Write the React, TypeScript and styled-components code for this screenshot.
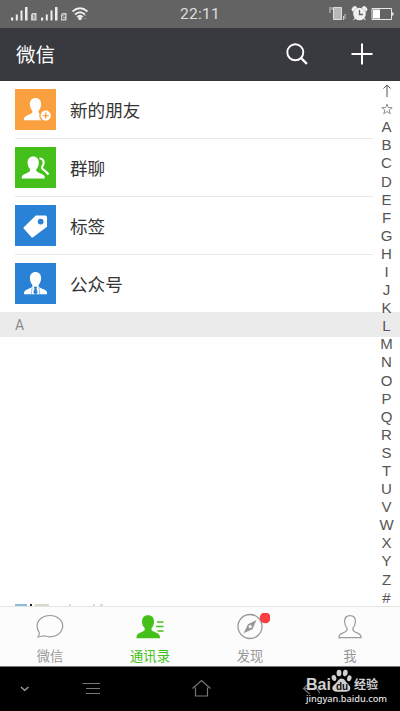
import React from 'react';
import styled, { createGlobalStyle } from 'styled-components';

const Global = createGlobalStyle`
  * { box-sizing: border-box; }
  body { margin: 0; background: #fff; font-family: Roboto, "Noto Sans CJK SC", sans-serif; }
  svg { display: block; flex: none; }
`;

const Screen = styled.div`
  width: 400px;
  height: 711px;
  display: flex;
  flex-direction: column;
  overflow: hidden;
  background: #fff;
`;

const StatusBar = styled.header`
  height: 28px;
  flex: none;
  display: grid;
  grid-template-columns: 1fr auto 1fr;
  background: #636363;
`;

const Clock = styled.time`
  color: #dedede;
  font: 400 15.5px/29px Roboto, sans-serif;
  letter-spacing: 0.25px;
`;

const StatusRight = styled.div`
  display: flex;
  justify-content: flex-end;
`;

const TitleBar = styled.div`
  height: 53px;
  flex: none;
  display: flex;
  align-items: center;
  gap: 43px;
  padding: 0 27px 0 16px;
  background: #393a3f;
  border-bottom: 1px solid #37363c;
`;

const Title = styled.h1`
  margin: 0;
  flex: 1;
  color: #fff;
  font: 400 19.5px/52px "Noto Sans CJK SC", sans-serif;
`;

const Content = styled.main`
  position: relative;
  height: 525px;
  flex: none;
`;

const Row = styled.div`
  height: 58px;
  padding-left: 15px;
`;

const RowInner = styled.div<{ $last?: boolean }>`
  width: 358px;
  height: 58px;
  display: flex;
  align-items: center;
  gap: 14px;
  border-bottom: 1px solid ${(p) => (p.$last ? 'transparent' : '#e9e9e9')};
`;

const Tile = styled.div<{ $color: string }>`
  width: 41px;
  height: 41px;
  background: ${(p) => p.$color};
`;

const Label = styled.span`
  color: #353535;
  font: 400 17.6px/26px "Noto Sans CJK SC", sans-serif;
`;

const Section = styled.div`
  height: 25px;
  padding-left: 15px;
  margin-top: -1px;
  background: #ebebeb;
  color: #8a8a8a;
  font: 400 14px/27px Roboto, sans-serif;
`;

const Peek = styled.div`
  position: absolute;
  left: 15px;
  bottom: 0;
`;

const Index = styled.nav`
  position: absolute;
  top: 1px;
  right: 0;
  width: 27px;
  display: flex;
  flex-direction: column;
  align-items: center;
`;

const Letter = styled.span`
  height: 18.1px;
  display: flex;
  align-items: center;
  color: #555;
  font: 400 15px/18px "Liberation Sans", sans-serif;
`;

const TabBar = styled.nav`
  height: 60px;
  flex: none;
  display: grid;
  grid-template-columns: repeat(4, 1fr);
  background: #fcfcfc;
  border-top: 1px solid #e4e4e4;
`;

const Tab = styled.div<{ $active?: boolean }>`
  display: flex;
  flex-direction: column;
  align-items: center;
  padding-top: 6px;
  color: ${(p) => (p.$active ? '#45c01a' : '#999')};
`;

const TabLabel = styled.span`
  font: 400 13.3px/20px "Noto Sans CJK SC", sans-serif;
  margin-top: 1px;
`;

const SystemBar = styled.footer`
  position: relative;
  height: 45px;
  flex: none;
  background: #000;
  border-top: 1px solid #777;
`;

const Watermark = styled.div`
  position: absolute;
  left: 306px;
  top: 1px;
  width: 76px;
  color: #d0d0d0;
`;

const Brand = styled.div`
  height: 25px;
  display: flex;
  align-items: flex-end;
  font: 700 16px/17px "Liberation Sans", sans-serif;
`;

const BrandCn = styled.span`
  margin-left: 1px;
  font: 700 12px/19px "Noto Sans CJK SC", sans-serif;
`;

const Site = styled.div`
  color: #e0e0e0;
  font: 500 9.2px/11px "Noto Sans", sans-serif;
  white-space: nowrap;
`;

const person =
  'M20.5 9c3.5 0 5.6 2.5 5.6 6 0 2.8-1 5.2-2.4 6.7-.6 1.7.3 2.6 2 3.3l4.4 2c1.6.8 2 1.7 2 4.2H9c0-2.5.5-3.4 2-4.2l4.3-2c1.7-.7 2.6-1.6 2-3.3C15.900 20.200 14.900 17.800 14.900 15c0-3.500 2.100-6 5.600-6z';

const Signals = () => (
  <svg width="100" height="28" viewBox="0 0 100 28" fill="#ededed">
    {[11, 41].map((x, n) => (
      <g key={x}>
        <path d={`M${x} 17.500h2.200v3h-2.200zM${x + 4.800} 14.500h2v6h-2zM${x + 9.500} 10.500h2v10h-2zM${x + 14} 7h2.500v13.500h-2.500z`} />
        <path d={`M${x + 20} 14.500l1.500-1.500h4v7.500h-5.500z`} opacity=".8" />
        <path
          d={n ? `M${x + 21.5} 15h2.200v1.700h-2.200v2h2.500` : `M${x + 22} 15h1v4`}
          fill="none"
          stroke="#666"
        />
      </g>
    ))}
    <g fill="none" stroke="#ededed" strokeWidth="1.7">
      <path d="M72.500 11.500q7.500-6.500 15 0M75 14.500q5-4.500 10 0M77.200 17q2.800-2.500 5.600 0" />
    </g>
    <circle cx="80" cy="18.400" r="1.800" />
    <path d="M84 16l1.300-1.500 1.300 1.500zM84 18l1.300 1.500 1.300-1.500z" fill="#999" />
  </svg>
);

const Indicators = () => (
  <svg width="75" height="28" viewBox="0 0 75 28">
    <path d="M8.500 7.500h8v12h-8z" fill="#b8b8b8" stroke="#ddd" />
    <path d="M5 7v6M7 7v3M18.500 16v4M20 14v5" stroke="#ccc" fill="none" />
    <circle cx="34.500" cy="14" r="6.300" fill="#f0f0f0" />
    <path d="M27.800 11.300a2.700 2.700 0 0 1 4.200-3.700zM41.200 11.300a2.700 2.700 0 0 0-4.200-3.700zM30 18l-1.500 2.200M39 18l1.500 2.200" fill="#eee" stroke="#eee" />
    <path d="M34.500 10v4.500h3.500" fill="none" stroke="#666" strokeWidth="1.300" />
    <path d="M47 8.500h19.500v11H47z" fill="none" stroke="#e8e8e8" />
    <path d="M48 9.500h7v9h-7z" fill="#fff" />
    <path d="M67 12.500h1.500v3H67z" fill="#e8e8e8" />
  </svg>
);

const NewFriend = () => (
  <svg width="41" height="41" viewBox="0 0 41 41">
    <path d={person} fill="#fff" />
    <circle cx="30.700" cy="26.600" r="6.500" fill="#fba03e" />
    <circle cx="30.700" cy="26.600" r="5.100" fill="#fff" />
    <path d="M27.700 26.600h6M30.700 23.600v6" stroke="#fba03e" strokeWidth="1.400" />
  </svg>
);

const Group = () => (
  <svg width="41" height="41" viewBox="0 0 41 41">
    <path d={person} fill="#fff" transform="translate(-2.300 .4)" />
    <path
      d="M24.500 11.500c3-.2 5.200 2.300 3.800 6-.5 1.400-1.400 2-1.400 3.300 0 1.900 3.400 2.400 6.600 6.700"
      stroke="#fff"
      strokeWidth="2.100"
      fill="none"
    />
  </svg>
);

const Tag = () => (
  <svg width="41" height="41" viewBox="0 0 41 41">
    <path
      fill="#fff"
      fillRule="evenodd"
      d="M20.800 10.500h10l1.200 1.200v10L18 32.300q-.8.600-1.500-.1l-7.800-8.700q-.6-.7.100-1.300zM25.700 13.700a2.900 2.900 0 1 0 0 5.800 2.900 2.900 0 1 0 0-5.800z"
    />
  </svg>
);

const Official = () => (
  <svg width="41" height="41" viewBox="0 0 41 41">
    <path d={person} fill="#fff" />
    <path d="M18.700 23.800h3.600l-.8 2 1.200 3.700-2.200 2.300-2.200-2.300 1.200-3.700z" fill="#2a82d6" />
    <path d="M17.200 24.500l-1 6.700M23.800 24.500l1 6.700" stroke="#2a82d6" strokeWidth=".5" />
  </svg>
);

const Star = () => (
  <svg width="12" height="12" viewBox="0 0 12 12" fill="none" stroke="#777" strokeWidth=".8">
    <path d="M6 1l1.300 3.600h3.900L8.100 7l1.200 3.800L6 8.500l-3.300 2.300L3.900 7 .8 4.600h3.900z" />
  </svg>
);

const Up = () => (
  <svg width="12" height="14" viewBox="0 0 12 14" fill="none" stroke="#555">
    <path d="M6 13V1M2.500 4.500L6 1l3.500 3.500" />
  </svg>
);

const Chat = () => (
  <svg width="40" height="32" viewBox="0 0 40 32" fill="none" stroke="#999" strokeWidth="1.200">
    <path d="M20 2.500c7.200 0 12.700 4.700 12.700 10.600S27.200 23.800 20 23.800c-2 0-3.900-.3-5.600-1-1.900-.2-3.700 1.200-6.500 1.200 1.200-1.500 1.700-2.700 1.400-4.500-1.400-1.800-2.200-4-2.200-6.400C7.100 7.200 12.800 2.500 20 2.500z" />
  </svg>
);

const Contacts = () => (
  <svg width="40" height="32" viewBox="0 0 40 32">
    <path
      fill="#45c01a"
      d="M18 2.200c4 0 6 2.600 6 6.300 0 3-1 5-2.300 6.600-.7 1.900.3 2.700 2 3.500l4.100 2c1.600.9 2.200 2 2.200 4.600H6.500c0-2.600.5-3.700 2.100-4.600l4-2c1.800-.8 2.600-1.600 2-3.500-1.500-1.600-2.600-3.600-2.600-6.600 0-3.700 2-6.300 6-6.300z"
    />
    <path d="M27 9h6.500M26 13.500h7.500M27.500 18h6" stroke="#45c01a" strokeWidth="1.600" />
  </svg>
);

const Compass = () => (
  <svg width="40" height="32" viewBox="0 0 40 32">
    <circle cx="20" cy="13.500" r="12" fill="none" stroke="#999" strokeWidth="1.300" />
    <path
      d="M26.500 7l-4 9.200-9 4 4.500-9zM20.200 11.900a1.600 1.600 0 1 0 0 3.200 1.600 1.600 0 1 0 0-3.200z"
      fill="#999"
      fillRule="evenodd"
    />
    <circle cx="35.200" cy="4.800" r="5.500" fill="#fb3f40" />
  </svg>
);

const Me = () => (
  <svg width="40" height="32" viewBox="0 0 40 32" fill="none" stroke="#999" strokeWidth="1.200">
    <path d="M20 2.700c3.600 0 5.400 2.500 5.400 5.700 0 2.700-.9 4.800-2.300 6.400-.8 2.300.2 3.400 2 4.200l4 1.900c1.600.8 2 1.600 2 3.700H8.900c0-2.100.4-2.900 2-3.700l4-1.900c1.800-.8 2.800-1.900 2-4.200-1.400-1.600-2.300-3.700-2.300-6.400 0-3.200 1.800-5.700 5.400-5.700z" />
  </svg>
);

const Paw = () => (
  <svg width="22" height="25" viewBox="0 0 22 25" fill="#d0d0d0">
    <ellipse cx="3" cy="10" rx="2.300" ry="3" transform="rotate(-15 3 10)" />
    <ellipse cx="8" cy="5" rx="2.400" ry="3.300" />
    <ellipse cx="14.300" cy="5" rx="2.400" ry="3.300" transform="rotate(8 14.300 5)" />
    <ellipse cx="18.300" cy="10.300" rx="2.200" ry="3" transform="rotate(15 18.300 10.300)" />
    <path d="M10.500 10.500c3 0 4 3 6 5s3.500 3.700 2.500 6-3.800 2.300-8.500 2.300-7.800.2-8.900-2.300 1-4.300 3-6 3-5 5.900-5z" />
    <text x="5" y="22" fontFamily="Liberation Sans, sans-serif" fontSize="10" fontWeight="700" fill="#111">
      du
    </text>
  </svg>
);

const rows = [
  { label: '新的朋友', color: '#fba03e', icon: <NewFriend /> },
  { label: '群聊', color: '#45c01a', icon: <Group /> },
  { label: '标签', color: '#2a82d6', icon: <Tag /> },
  { label: '公众号', color: '#2a82d6', icon: <Official /> },
];

const tabs = [
  { label: '微信', icon: <Chat /> },
  { label: '通讯录', icon: <Contacts />, active: true },
  { label: '发现', icon: <Compass /> },
  { label: '我', icon: <Me /> },
];

export default function App() {
  return (
    <>
      <Global />
      <Screen>
        <StatusBar>
          <Signals />
          <Clock>22:11</Clock>
          <StatusRight>
            <Indicators />
          </StatusRight>
        </StatusBar>
        <TitleBar>
          <Title>微信</Title>
          <svg width="22" height="22" viewBox="0 0 22 22" fill="none" stroke="#fff" strokeWidth="1.900">
            <circle cx="9.300" cy="9.300" r="8" />
            <path d="M14.900 14.900l6 6" strokeWidth="2.300" />
          </svg>
          <svg width="22" height="22" viewBox="0 0 22 22" stroke="#fff" strokeWidth="2">
            <path d="M.5 11h21M11 .5v21" />
          </svg>
        </TitleBar>
        <Content>
          {rows.map((r, i) => (
            <Row key={r.label}>
              <RowInner $last={i === rows.length - 1}>
                <Tile $color={r.color}>{r.icon}</Tile>
                <Label>{r.label}</Label>
              </RowInner>
            </Row>
          ))}
          <Section>A</Section>
          <Peek>
            <svg width="95" height="2" viewBox="0 0 95 2">
              <path d="M0 0h12v2H0z" fill="#8dbddd" />
              <path d="M15 0h2v2h-2z" fill="#222" />
              <path d="M20 0h14v2H20z" fill="#d3dccb" />
              <path d="M54 1h2M78 1h2M85 1h3" stroke="#bbb" />
            </svg>
          </Peek>
          <Index>
            <Letter><Up /></Letter>
            <Letter><Star /></Letter>
            {'ABCDEFGHIJKLMNOPQRSTUVWXYZ#'.split('').map((c) => (
              <Letter key={c}>{c}</Letter>
            ))}
          </Index>
        </Content>
        <TabBar>
          {tabs.map((t) => (
            <Tab key={t.label} $active={t.active}>
              {t.icon}
              <TabLabel>{t.label}</TabLabel>
            </Tab>
          ))}
        </TabBar>
        <SystemBar>
          <svg width="400" height="44" viewBox="0 0 400 44" fill="none" stroke="#777" strokeWidth="1.200">
            <path d="M21 20l3.700 3.500 3.700-3.500" stroke="#aaa" />
            <path d="M82.500 16.500h17.500M86 21.500h14M86 26.500h14" />
            <path d="M192.500 21.500l9-8 9 8M195.500 20.500v8.500h12v-8.500" />
            <path d="M309.500 16l-6 5.500 6 5.500M303.500 21.500h11q4 0 5 5" />
          </svg>
          <Watermark>
            <Brand>
              Bai
              <Paw />
              <BrandCn>经验</BrandCn>
            </Brand>
            <Site>jingyan.baidu.com</Site>
          </Watermark>
        </SystemBar>
      </Screen>
    </>
  );
}
